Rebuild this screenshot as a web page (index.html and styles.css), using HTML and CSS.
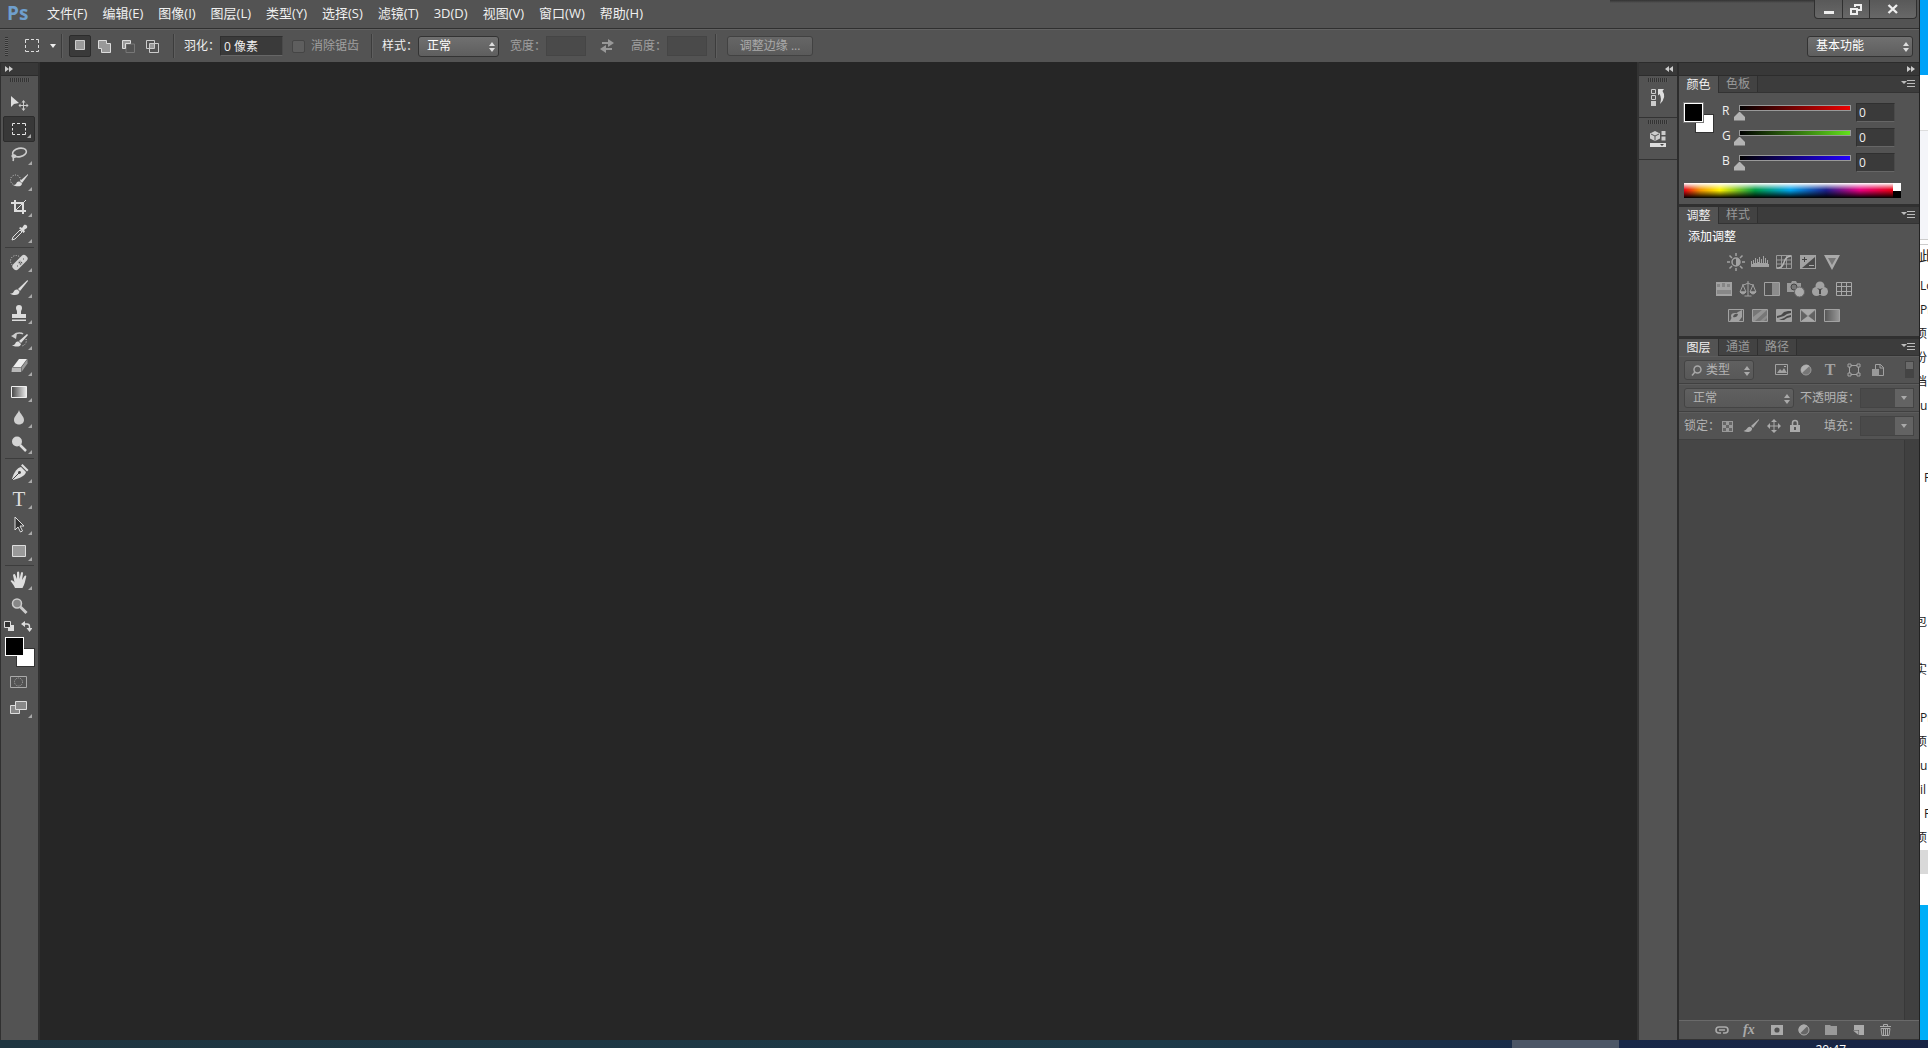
FILE: index.html
```html
<!DOCTYPE html>
<html lang="zh-CN">
<head>
    <meta charset="UTF-8">
    <meta name="viewport" content="width=device-width, initial-scale=1.0">
    <title>Ps</title>
    <link rel="stylesheet" href="styles.css">
</head>
<body>
    <div class="desktop">
        <div class="app">
            <!-- Menu bar -->
            <header class="menubar">
                <div class="logo">Ps</div>
                <nav class="menu">
                    <a href="#">文件(F)</a>
                    <a href="#">编辑(E)</a>
                    <a href="#">图像(I)</a>
                    <a href="#">图层(L)</a>
                    <a href="#">类型(Y)</a>
                    <a href="#">选择(S)</a>
                    <a href="#">滤镜(T)</a>
                    <a href="#">3D(D)</a>
                    <a href="#">视图(V)</a>
                    <a href="#">窗口(W)</a>
                    <a href="#">帮助(H)</a>
                </nav>
                <div class="top-shadow"></div>
                <div class="window-buttons">
                    <button aria-label="最小化"><svg width="12" height="12"><path d="M1 8h10v3H1z" fill="#eee"/></svg></button>
                    <button aria-label="还原"><svg width="12" height="12" fill="none" stroke="#eee" stroke-width="2"><path d="M5 4V2h6v5H8"/><path d="M1 6h6v5H1z"/></svg></button>
                    <button class="wide" aria-label="关闭"><svg width="12" height="12" stroke="#eee" stroke-width="2.400"><path d="M1.500 2l8.500 8M10 2L1.500 10"/></svg></button>
                </div>
            </header>

            <!-- Tool options -->
            <div class="options">
                <div class="grip-v"></div>
                <button class="preset" aria-label="矩形选框工具">
                    <svg width="16" height="16" fill="none" stroke="#ddd"><path d="M1.500 5V1.500H5M7 1.500h3M12 1.500h2.500V5M14.500 7v3M14.500 12v1.500H12M10 13.500H7M5 13.500H1.500V12M1.500 10V7"/></svg>
                    <svg width="6" height="4"><path d="M0 0h6L3 4z" fill="#eee"/></svg>
                </button>
                <div class="divider"></div>
                <div class="modes">
                    <button class="on" aria-label="新选区"><svg width="14" height="14"><path d="M2.500 1.500h9v9h-9z" fill="#999" stroke="#ccc"/></svg></button>
                    <button aria-label="添加到选区"><svg width="14" height="14"><path d="M1.500 1.500h8v3h4v9h-9v-4h-3z" fill="#999" stroke="#ddd"/></svg></button>
                    <button aria-label="从选区减去"><svg width="14" height="14" fill="none"><path d="M5 5h8.500v8.500H5z" stroke="#777"/><path d="M1.500 1.500h8v3h-5v5h-3z" fill="#999" stroke="#ddd"/></svg></button>
                    <button aria-label="与选区交叉"><svg width="14" height="14" fill="none" stroke="#ccc"><path d="M1.500 1.500h8v8h-8z"/><path d="M4.500 4.500h9v9h-9z"/><path d="M5 5h4v4H5z" fill="#999" stroke="none"/></svg></button>
                </div>
                <div class="divider"></div>
                <label for="feather">羽化：</label>
                <input id="feather" class="field feather" type="text" value="0 像素">
                <label class="check dim"><input type="checkbox" disabled>消除锯齿</label>
                <div class="divider"></div>
                <label for="style">样式：</label>
                <span class="picker style-picker">
                    <select id="style"><option>正常</option></select>
                    <svg width="6" height="10"><path d="M0 4l3-4 3 4zM0 6h6l-3 4z"/></svg>
                </span>
                <label for="w" class="dim">宽度：</label>
                <input id="w" class="field size" type="text" disabled>
                <button class="swap" aria-label="交换宽高"><svg width="14" height="14" fill="#999"><path d="M2 3h6V0l6 4-6 4V5H2z"/><path d="M12 9H6V6l-6 4 6 4v-3h6z"/></svg></button>
                <label for="h" class="dim">高度：</label>
                <input id="h" class="field size" type="text" disabled>
                <div class="divider"></div>
                <button class="refine" disabled>调整边缘 ...</button>
                <span class="picker workspace">
                    <select aria-label="工作区"><option>基本功能</option></select>
                    <svg width="6" height="10"><path d="M0 4l3-4 3 4zM0 6h6l-3 4z"/></svg>
                </span>
            </div>

            <main class="workarea">
                <!-- Toolbox -->
                <aside class="toolbox">
                    <div class="dock-head left"><svg width="8" height="6"><path d="M0 0l4 3-4 3zM4 0l4 3-4 3z"/></svg></div>
                    <div class="grip"></div>
                    <div class="tools">
                        <button class="tool plain" aria-label="移动工具"><svg width="20" height="20"><path d="M2 3v11l3-3 5-1z" fill="#ddd"/><path d="M14.500 7l2 2.500h-1.500V12h2.500v-1.500l2 2-2 2V13H15v2.500h1.500l-2 2.500-2-2.500H14V13h-2.500v1.500l-2-2 2-2V12H14V9.500h-1.500z" fill="#ccc"/></svg></button>
                        <button class="tool on" aria-label="矩形选框工具"><svg width="20" height="20" fill="none" stroke="#e4e4e4"><path d="M3.500 7V4.500H6M8 4.500h3M13 4.500h3.500V7M16.500 9v2.500M16.500 13v2.500H13M11 15.500H8M6 15.500H3.500V13M3.500 11.500V9"/></svg></button>
                        <button class="tool" aria-label="套索工具"><svg width="20" height="20" fill="none" stroke="#ccc" stroke-width="1.600"><ellipse cx="10.500" cy="7.500" rx="7" ry="4.200" transform="rotate(-12 10.500 7.500)"/><path d="M4 10c-2 1 0 3 2 2s-1-3-2-1c0 2 1 3 0 5"/></svg></button>
                        <button class="tool" aria-label="快速选择工具"><svg width="20" height="20"><circle cx="6.500" cy="9" r="5" fill="none" stroke="#ccc" stroke-dasharray="1 1.500"/><path d="M19 3l-8 7 2 2 6-8z" fill="#ddd"/><path d="M10.500 10.500c-2-.5-3 1-3.500 2.500-.5 1-2 1-3 1 3 2 9 2 9-1.500z" fill="#ddd"/></svg></button>
                        <button class="tool" aria-label="裁剪工具"><svg width="20" height="20" fill="none" stroke="#ddd" stroke-width="2"><path d="M6 3v11h11M2 6h12v11"/><path d="M6 14l11-11" stroke-width="1"/></svg></button>
                        <button class="tool" aria-label="吸管工具"><svg width="20" height="20"><path d="M11 7l2 2-7 7-3 1 1-3z" fill="#555" stroke="#ddd"/><path d="M10 5l1.500-1 1.500 1 2-3c2-1 4 1 3 3l-3 2 1 1.500-1.500 1.500z" fill="#ddd"/></svg></button>
                        <hr>
                        <button class="tool" aria-label="污点修复画笔工具"><svg width="20" height="20"><circle cx="7" cy="9" r="5.500" fill="none" stroke="#ccc" stroke-dasharray="1 1.500"/><rect x="2" y="7" width="18" height="7" rx="3" fill="#d4d4d4" transform="rotate(-45 11 10.500)"/><path d="M8.500 10.500l2.500-2.500 3 3-2.500 2.500z" fill="#aaa"/><path d="M10 10.500h1M12 10.500h1M11 12h1M14 7h1M8 14h1" stroke="#555"/></svg></button>
                        <button class="tool" aria-label="画笔工具"><svg width="20" height="20"><path d="M18.500 2L9 11l2 2 8-10z" fill="#ddd"/><path d="M8.500 11.500c-2-.5-3.500 1-4 2.500-.5 1-2 1.500-3.500 1.500 3.500 2.500 9.500 2 9.500-2z" fill="#ddd"/></svg></button>
                        <button class="tool" aria-label="仿制图章工具"><svg width="20" height="20" fill="#ddd"><path d="M10 1a3 3 0 0 1 3 3c0 2-1 2-1 4v2h5v4H3v-4h5V8c0-2-1-2-1-4a3 3 0 0 1 3-3zM3 15.500h14V17H3z"/></svg></button>
                        <button class="tool" aria-label="历史记录画笔工具"><svg width="20" height="20"><path d="M5 5c3-3 8-2 9-1" fill="none" stroke="#ccc" stroke-width="1.500"/><path d="M2 6l6-3-1 6z" fill="#ccc"/><path d="M18 4l-8 7 2 2 7-8z" fill="#ddd"/><path d="M9.500 11.500c-2-.5-3 1-3.500 2.500-.5 1-2 1-3 1 3 2.500 9 2 9-1z" fill="#ddd"/><path d="M17 9c1 4-1 6-4 7" fill="none" stroke="#ccc" stroke-dasharray="1 1.500"/></svg></button>
                        <button class="tool" aria-label="橡皮擦工具"><svg width="20" height="20"><path d="M10 3h8l-6 8H4z" fill="#eee"/><path d="M3 11.500h9V16H2.500z" fill="#b8b8b8"/><path d="M18.500 3v4.500L12.500 16v-4.500z" fill="#999"/></svg></button>
                        <button class="tool" aria-label="渐变工具"><svg width="20" height="20"><defs><linearGradient id="g1"><stop stop-color="#444"/><stop offset="1" stop-color="#eee"/></linearGradient></defs><path d="M2.500 4.500h15v11h-15z" fill="url(#g1)" stroke="#eee"/></svg></button>
                        <button class="tool" aria-label="模糊工具"><svg width="20" height="20"><path d="M10 2c1 4 5 6 5 10 0 3-2.500 4.500-5 4.500S5 15 5 12c0-4 4-6 5-10z" fill="#cfcfcf"/></svg></button>
                        <button class="tool" aria-label="减淡工具"><svg width="20" height="20"><circle cx="8" cy="7.500" r="5" fill="#d4d4d4"/><path d="M11 11l6 6" stroke="#ddd" stroke-width="2.500"/></svg></button>
                        <hr>
                        <button class="tool" aria-label="钢笔工具"><svg width="20" height="20"><path d="M12 4l5 5c-1 4-6 6-13 8L3 16C5 9 8 5 12 4z" fill="#ddd"/><path d="M3 17l7-7" stroke="#444"/><circle cx="10.500" cy="9.500" r="1.400" fill="#444"/><path d="M12 2.500l1.500-1.500 6 6-1.500 1.500z" fill="#ddd"/></svg></button>
                        <button class="tool type" aria-label="横排文字工具">T</button>
                        <button class="tool" aria-label="路径选择工具"><svg width="20" height="20"><path d="M6 2v13l3-3 2.500 5 2-1-2.500-5h4z" fill="#333" stroke="#ddd"/></svg></button>
                        <button class="tool" aria-label="矩形工具"><svg width="20" height="20"><path d="M3.500 4.500h13v11h-13z" fill="#999" stroke="#ddd"/></svg></button>
                        <hr>
                        <button class="tool" aria-label="抓手工具"><svg width="20" height="20"><path d="M6 18c-1-3-3-5-4.500-7 1-1.500 2.500-.5 4 1.500L4 5c1-1.500 2-1 2.500.5L8 9V2.500c.5-1.500 2-1.500 2.200 0L10.500 9 12 3c.5-1.500 2-1 2 .5L13 10l2.500-4c1-1 2-.5 1.700.8C16 11 16 14 13.500 18z" fill="#ddd"/></svg></button>
                        <button class="tool plain" aria-label="缩放工具"><svg width="20" height="20"><circle cx="8" cy="7.500" r="4.500" fill="#888" stroke="#ccc" stroke-width="1.500"/><path d="M11.500 11l6 6" stroke="#ccc" stroke-width="3"/></svg></button>
                    </div>
                    <div class="color-actions">
                        <svg width="11" height="11"><path d="M4 4h6v6H4z" fill="#ddd"/><path d="M.5.5h6v6h-6z" fill="#333" stroke="#ddd"/></svg>
                        <svg width="11" height="11" fill="none" stroke="#ddd" stroke-width="1.400"><path d="M2 3h4q2.500 0 2.500 2.500V8"/><path d="M4 0v6L0 3zM5.500 7h6l-3 4z" fill="#ddd" stroke="none"/></svg>
                    </div>
                    <div class="swatches"><span class="back"></span><span class="fore"></span></div>
                    <button class="tool plain" aria-label="快速蒙版"><svg width="20" height="20" fill="none" stroke="#aaa"><path d="M1.500 4.500h16v11h-16z"/><circle cx="9.500" cy="10" r="4" stroke-dasharray="1 1"/></svg></button>
                    <button class="tool" aria-label="屏幕模式"><svg width="20" height="20" fill="#888" stroke="#ddd"><path d="M1.500 7.500h9v8h-9z"/><path d="M6.500 3.500h11v8h-11z"/></svg></button>
                </aside>

                <section class="canvas"></section>

                <!-- Collapsed icon dock -->
                <aside class="icon-dock">
                    <div class="dock-head"><svg width="8" height="6"><path d="M4 0L0 3l4 3zM8 0L4 3l4 3z"/></svg></div>
                    <div class="dock-group">
                        <div class="grip"></div>
                        <button aria-label="历史记录"><svg width="18" height="20"><path d="M2.500 2.500h4v4h-4zM2.500 8.500h4v4h-4z" fill="none" stroke="#ccc"/><path d="M2 14h5v5H2z" fill="#ccc"/><path d="M9 2h6l-1.500 2q4.500 6-2.500 13 2-6-.5-10L9 8.500z" fill="#ddd"/></svg></button>
                    </div>
                    <div class="dock-group">
                        <div class="grip"></div>
                        <button aria-label="属性"><svg width="18" height="20"><path d="M6 2l5 2.500v5L6 12 1 9.500v-5z" fill="#ccc"/><path d="M2 5l4 2 4-2M6 7v4.500" fill="none" stroke="#555"/><path d="M12.500 2h4v4h-4zM12.500 7.500h4v4h-4z" fill="#ccc"/><path d="M1 14h16v4H1z" fill="#ddd"/><path d="M11 15h4l-2 2z" fill="#444"/></svg></button>
                    </div>
                </aside>

                <!-- Panels -->
                <aside class="panels">
                    <div class="dock-head"><svg width="8" height="6"><path d="M0 0l4 3-4 3zM4 0l4 3-4 3z"/></svg></div>

                    <section class="panel">
                        <div class="tabs">
                            <button class="active">颜色</button><button>色板</button>
                            <svg class="flyout" width="14" height="10"><path d="M0 2h6L3 5z" fill="#bbb"/><path d="M6 1.500h8M6 4.500h8M6 7.500h8" stroke="#bbb"/></svg>
                        </div>
                        <div class="color-body">
                            <div class="color-main">
                                <div class="swatches"><span class="back"></span><span class="fore"></span></div>
                                <div class="channels">
                                    <label for="r">R</label><input id="r" class="red" type="range" min="0" max="255" value="0"><input class="field" type="text" value="0" aria-label="R">
                                    <label for="g">G</label><input id="g" class="green" type="range" min="0" max="255" value="0"><input class="field" type="text" value="0" aria-label="G">
                                    <label for="b">B</label><input id="b" class="blue" type="range" min="0" max="255" value="0"><input class="field" type="text" value="0" aria-label="B">
                                </div>
                            </div>
                            <div class="ramp"><div class="spectrum"></div><div class="ends"></div></div>
                        </div>
                    </section>

                    <section class="panel">
                        <div class="tabs">
                            <button class="active">调整</button><button>样式</button>
                            <svg class="flyout" width="14" height="10"><path d="M0 2h6L3 5z" fill="#bbb"/><path d="M6 1.500h8M6 4.500h8M6 7.500h8" stroke="#bbb"/></svg>
                        </div>
                        <div class="adjust-body">
                            <p>添加调整</p>
                            <div class="adjust-row">
                                <svg width="18" height="18"><circle cx="9" cy="9" r="4" fill="none" stroke="#a2a2a2" stroke-width="1.500"/><path d="M9 5a4 4 0 0 1 0 8z" fill="#a2a2a2"/><path d="M9 0v3M9 15v3M0 9h3M15 9h3M2.500 2.500L5 5M13 13l2.500 2.500M2.500 15.500L5 13M13 5l2.500-2.500" stroke="#a2a2a2" stroke-width="1.500"/></svg>
                                <svg width="18" height="18"><path d="M0 14V8h1v3h1V7h1v3h1V5h1v5h1V6h1v3h1V4h1v6h1V6h1v4h1V3h1v7h1V5h1v5h1V7h1v4h1v3z" fill="#a2a2a2"/></svg>
                                <svg width="18" height="18" fill="none" stroke="#9a9a9a"><path d="M1.500 2.500h15v13h-15zM6.500 2.500v13M11.500 2.500v13M1.500 7h15M1.500 11h15"/><path d="M2 15C12 15 6 4 16 3" stroke="#b4b4b4" stroke-width="1.500"/></svg>
                                <svg width="18" height="18"><path d="M1 2h16v14H1z" fill="#a2a2a2"/><path d="M16 4v11H3z" fill="#4a4a4a"/><path d="M5.500 4v5M3 6.500h5" stroke="#444"/><path d="M10 12.500h5" stroke="#aaa"/></svg>
                                <svg width="18" height="18"><path d="M1 2h16L9 17z" fill="#aaa"/><path d="M5 5h8l-4 7z" fill="#777"/></svg>
                            </div>
                            <div class="adjust-row">
                                <svg width="18" height="18"><path d="M1 2h16v14H1z" fill="#a2a2a2"/><path d="M2 4h3v3H2zM7 3h3v4H7zM12 4h3v3h-3z" fill="#868686"/><path d="M2 10h14v4H2z" fill="#888"/></svg>
                                <svg width="18" height="18" fill="none" stroke="#a2a2a2"><path d="M9 1v15M5.500 16h7M3 5q3 0 6-2 3 2 6 2M4 5L1 12h6L4 5M14 5l-3 7h6z"/><path d="M1 12q3 4 6 0zM11 12q3 4 6 0z" fill="#a2a2a2"/></svg>
                                <svg width="18" height="18"><path d="M1.500 2.500h15v13h-15z" fill="#505050" stroke="#a2a2a2"/><path d="M9 3h7v12H9z" fill="#8c8c8c"/></svg>
                                <svg width="18" height="18"><path d="M0 3h4l1-2h4l1 2h4v9H0z" fill="#999"/><circle cx="7" cy="7" r="3" fill="#777" stroke="#444"/><circle cx="12.500" cy="12" r="5" fill="#aaa" stroke="#666"/></svg>
                                <svg width="18" height="18" fill="#a2a2a2"><circle cx="9" cy="6" r="4.500"/><circle cx="5.500" cy="11.500" r="4.500"/><circle cx="12.500" cy="11.500" r="4.500"/><path d="M6 8l3 1 3-1-2 2v4H8v-4z" fill="#484848"/></svg>
                                <svg width="18" height="18" fill="none" stroke="#a8a8a8"><path d="M1.500 2.500h15v13h-15zM6.500 2.500v13M11.500 2.500v13M1.500 6.500h15M1.500 11.500h15"/></svg>
                            </div>
                            <div class="adjust-row">
                                <svg width="18" height="18"><path d="M1.500 2.500h15v12h-15z" fill="#5c5c5c" stroke="#a2a2a2"/><path d="M11 5l4-2v7l-3 4H3l2-4z" fill="#a2a2a2"/><ellipse cx="8" cy="9" rx="4" ry="3" fill="#a2a2a2"/><path d="M6 10q1-4 5-3-1 4-5 3z" fill="#555"/></svg>
                                <svg width="18" height="18"><path d="M1.500 2.500h15v12h-15z" fill="#777" stroke="#a2a2a2"/><path d="M2 10l9-7h5L4 14H2z" fill="#949494"/><path d="M9 14l7-6v3l-3 3z" fill="#8c8c8c"/></svg>
                                <svg width="18" height="18"><path d="M1.500 2.500h15v12h-15z" fill="#a2a2a2" stroke="#a2a2a2"/><path d="M2 9l4-1 3-3 4-1h3v2l-4 1-3 2-7 2zM4 13l5-2 3-2 4-1v2l-4 1-3 2z" fill="#484848"/></svg>
                                <svg width="18" height="18"><path d="M1.500 2.500h15v12h-15z" fill="#777" stroke="#a2a2a2"/><path d="M2 3h14L9 9zM2 14l7-5 7 5z" fill="#a8a8a8"/><path d="M2 4l6 5-6 5zM16 4l-6 5 6 5z" fill="#626262"/></svg>
                                <svg width="18" height="18"><defs><linearGradient id="g2"><stop stop-color="#555"/><stop offset="1" stop-color="#999"/></linearGradient></defs><path d="M1.500 2.500h15v12h-15z" fill="url(#g2)" stroke="#a2a2a2"/></svg>
                            </div>
                        </div>
                    </section>

                    <section class="panel layers">
                        <div class="tabs">
                            <button class="active">图层</button><button>通道</button><button>路径</button>
                            <svg class="flyout" width="14" height="10"><path d="M0 2h6L3 5z" fill="#bbb"/><path d="M6 1.500h8M6 4.500h8M6 7.500h8" stroke="#bbb"/></svg>
                        </div>
                        <div class="layer-row filter-row">
                            <span class="picker flat kind">
                                <svg class="lens" width="11" height="11" fill="none" stroke="#a8a8a8" stroke-width="1.500"><circle cx="6.500" cy="4.500" r="3.500"/><path d="M4 7L1 10.500"/></svg>
                                <select aria-label="图层类型"><option>类型</option></select>
                                <svg width="6" height="10"><path d="M0 4l3-4 3 4zM0 6h6l-3 4z"/></svg>
                            </span>
                            <div class="filters">
                                <svg width="14" height="14"><path d="M.5 1.500h12v10H.5z" fill="#555" stroke="#a2a2a2"/><path d="M2 10l3-4 2 2 2-3 3 5z" fill="#a2a2a2"/><path d="M9 3h2v1H9z" fill="#aaa"/></svg>
                                <svg width="14" height="14"><circle cx="7" cy="7" r="5" fill="#777" stroke="#999"/><path d="M3 10A5.200 5.200 0 0 1 10.500 3z" fill="#b0b0b0"/></svg>
                                <span class="t-icon">T</span>
                                <svg width="14" height="14" fill="none" stroke="#a2a2a2"><path d="M2.500 4v6M11.500 4v6M4 2.500h6M4 11.500h6"/><path d="M1 1h3v3H1zM10 1h3v3h-3zM1 10h3v3H1zM10 10h3v3h-3z"/></svg>
                                <svg width="14" height="14"><path d="M4.500 1.500h5l3 3v8h-8z" fill="none" stroke="#a2a2a2"/><path d="M9 1v4h4" fill="none" stroke="#a2a2a2"/><path d="M1 6h7v7H1z" fill="#999"/></svg>
                            </div>
                            <span class="switch"></span>
                        </div>
                        <div class="layer-row">
                            <span class="picker flat blend">
                                <select aria-label="混合模式"><option>正常</option></select>
                                <svg width="6" height="10"><path d="M0 4l3-4 3 4zM0 6h6l-3 4z"/></svg>
                            </span>
                            <label class="push" for="opacity">不透明度：</label>
                            <span class="combo"><input id="opacity" type="text" disabled><button aria-label="不透明度"><svg width="6" height="4"><path d="M0 0h6L3 4z" fill="#aaa"/></svg></button></span>
                        </div>
                        <div class="layer-row">
                            <span>锁定：</span>
                            <div class="locks">
                                <svg width="14" height="14"><path d="M1 2h11v11H1z" fill="#999"/><path d="M2 3h3v3H2zM8 3h3v3H8zM5 6h3v3H5zM2 9h3v3H2zM8 9h3v3H8z" fill="#666"/></svg>
                                <svg width="16" height="14"><path d="M16 0L8 7l2 2 6-8z" fill="#aaa"/><path d="M7.500 8c-3-1-3 3-7 4 4 2 9 1 8.500-3z" fill="#aaa"/></svg>
                                <svg width="14" height="14" fill="#aaa"><path d="M7 0l3 3H7.500v3.500H11V4l3 3-3 3V7.500H7.500V11H10l-3 3-3-3h2.500V7.500H3V10L0 7l3-3v2.500h3.500V3H4z"/></svg>
                                <svg width="12" height="14"><path d="M3.500 7V4a2.500 2.500 0 0 1 5 0v3" fill="none" stroke="#aaa" stroke-width="1.500"/><path d="M1 6h10v7H1z" fill="#aaa"/><path d="M5 8h2v3H5z" fill="#555"/></svg>
                            </div>
                            <label class="push" for="fill">填充：</label>
                            <span class="combo"><input id="fill" type="text" disabled><button aria-label="填充"><svg width="6" height="4"><path d="M0 0h6L3 4z" fill="#aaa"/></svg></button></span>
                        </div>
                        <div class="layer-list"><div class="scrollbar"></div></div>
                        <div class="layer-foot">
                            <svg width="16" height="14" fill="none" stroke="#aaa" stroke-width="1.600"><path d="M7 10H5a3 3 0 0 1 0-6h6a3 3 0 0 1 0 6H9M5 7h6"/></svg>
                            <span class="fx">fx</span>
                            <svg width="14" height="14"><path d="M1 2h12v10H1z" fill="#aaa"/><circle cx="7" cy="7" r="2.600" fill="#505050"/></svg>
                            <svg width="14" height="14"><circle cx="7" cy="7" r="5" fill="#666" stroke="#aaa"/><path d="M3 10.500A5.200 5.200 0 0 1 10.500 3z" fill="#aaa"/></svg>
                            <svg width="14" height="14"><path d="M1 2h5l1 1h6v9H1z" fill="#999"/></svg>
                            <svg width="14" height="14"><path d="M3 2h10v10H8V7H3z" fill="#aaa"/><path d="M2 7.500h5.500V12z" fill="#aaa"/></svg>
                            <svg width="14" height="14" fill="none" stroke="#aaa"><path d="M2 3.500h11M5.500 3V1.500h4V3M3 5.500l1 7h7l1-7zM5.500 5.500v7M7.500 5.500v7M9.500 5.500v7"/></svg>
                        </div>
                    </section>
                </aside>
            </main>
        </div>

        <!-- Edge of the window behind -->
        <div class="behind">
            <div class="page-head"></div>
            <div class="page-bar"></div>
            <div class="crumb">此</div>
            <ul>
                <li>Lo</li>
                <li>Pr</li>
                <li class="cut">项</li>
                <li class="cut">份</li>
                <li class="cut">档</li>
                <li>u</li>
                <li></li>
                <li></li>
                <li class="in">F</li>
                <li></li>
                <li></li>
                <li></li>
                <li></li>
                <li></li>
                <li class="cut">包</li>
                <li></li>
                <li class="cut">实</li>
                <li></li>
                <li>Pr</li>
                <li class="cut">项</li>
                <li>u</li>
                <li>il</li>
                <li class="in">F</li>
                <li class="cut">项</li>
                <li class="selected"></li>
            </ul>
            <div class="page-end"></div>
        </div>
    </div>
    <footer class="taskbar">
        <div class="task"></div>
        <time>20:47</time>
    </footer>
</body>
</html>
```
FILE: styles.css
```css
* {
    box-sizing: border-box;
}

body {
    margin: 0;
    height: 100vh;
    display: flex;
    flex-direction: column;
    overflow: hidden;
    background: #262626;
    color: #f0f0f0;
    font: 12px/16px "Open Sans", "Noto Sans CJK SC", sans-serif;
}

button, input, select {
    margin: 0;
    padding: 0;
    border: 0;
    border-radius: 0;
    background: none;
    color: inherit;
    font: inherit;
}

svg {
    display: block;
    flex: none;
}

.desktop {
    flex: 1;
    min-height: 0;
    display: flex;
}

.app {
    flex: 1;
    min-width: 0;
    display: flex;
    flex-direction: column;
    background: #535353;
    border-right: 1px solid #222;
}

/* Menu bar */
.menubar {
    height: 29px;
    display: flex;
    align-items: center;
    padding: 0 2px 2px 7px;
    border-bottom: 1px solid #303030;
}

.logo {
    width: 40px;
    color: #6f9fcd;
    font: bold 19px/26px "Open Sans", sans-serif;
}

.menu {
    display: flex;
    gap: 15px;
    font-size: 13px;
}

.menu a {
    color: #f0f0f0;
    text-decoration: none;
}

.top-shadow {
    width: 204px;
    height: 3px;
    margin-left: auto;
    align-self: flex-start;
    background: linear-gradient(#333, #535353);
}

.window-buttons {
    display: flex;
    align-self: flex-start;
    height: 19px;
    border: 1px solid #303030;
    border-top: 0;
    border-radius: 0 0 4px 4px;
    background: linear-gradient(#595959, #686868);
}

.window-buttons button {
    width: 27px;
    display: grid;
    place-items: center;
}

.window-buttons button + button {
    border-left: 1px solid #303030;
}

.window-buttons .wide {
    width: 47px;
}

/* Options bar */
.options {
    height: 33px;
    display: flex;
    align-items: center;
    padding: 0 6px 0 5px;
    border-top: 1px solid #626262;
}

.grip-v {
    width: 3px;
    height: 19px;
    background: repeating-linear-gradient(#333 0 1px, #666 1px 2px);
}

.preset {
    display: flex;
    align-items: center;
    gap: 10px;
    margin: 0 5px 0 16px;
}

.divider {
    width: 2px;
    height: 24px;
    background: #3c3c3c;
    border-right: 1px solid #5e5e5e;
}

.modes {
    display: flex;
    gap: 2px;
    margin: 0 10px 0 6px;
}

.modes button {
    width: 22px;
    height: 22px;
    display: grid;
    place-items: center;
}

.modes .on {
    background: #3a3a3a;
    border: 1px solid #2c2c2c;
    border-radius: 2px;
}

.options label {
    margin-left: 9px;
    white-space: nowrap;
}

.dim {
    color: #a0a0a0;
}

.field {
    height: 20px;
    padding: 0 3px;
    background: #3a3a3a;
    border: 1px solid #303030;
    border-right-color: #4a4a4a;
    border-bottom-color: #666;
}

.feather {
    width: 63px;
}

.size {
    width: 40px;
}

.field:disabled {
    background: #4a4a4a;
    border-color: #454545;
}

.check {
    display: flex;
    align-items: center;
    gap: 6px;
    margin-right: 12px;
}

.check input {
    appearance: none;
    width: 13px;
    height: 13px;
    background: #5e5e5e;
    border: 1px solid #454545;
    border-radius: 2px;
}

.picker {
    position: relative;
    display: flex;
}

.picker select {
    appearance: none;
    width: 100%;
    height: 21px;
    padding-left: 8px;
    background: linear-gradient(#707070, #5e5e5e);
    border: 1px solid #333;
    border-radius: 3px;
    color: #fff;
}

.picker svg {
    position: absolute;
    right: 4px;
    top: 6px;
    fill: #ddd;
}

.style-picker {
    width: 81px;
    margin-right: 2px;
}

.workspace {
    width: 106px;
    margin-left: auto;
}

.swap {
    margin: 0 8px 0 14px;
}

.size + .divider {
    margin: 0 10px 0 8px;
}

.refine {
    width: 86px;
    height: 20px;
    background: linear-gradient(#666, #5a5a5a);
    border: 1px solid #424242;
    border-radius: 3px;
    color: #aaa;
}

/* Docks */
.workarea {
    flex: 1;
    min-height: 0;
    display: flex;
}

.dock-head {
    flex: none;
    height: 14px;
    display: flex;
    align-items: center;
    justify-content: flex-end;
    padding: 0 4px;
    background: #383838;
    border-top: 1px solid #2c2c2c;
    border-bottom: 1px solid #2c2c2c;
}

.dock-head svg {
    fill: #ccc;
}

.dock-head.left {
    justify-content: flex-start;
}

.grip {
    width: 20px;
    height: 4px;
    margin: 2px auto 0;
    background: repeating-linear-gradient(90deg, #333 0 1px, #5a5a5a 1px 2px);
}

.toolbox {
    width: 40px;
    border-left: 1px solid #303030;
    border-right: 2px solid #303030;
}

.tools {
    margin-top: 8px;
}

.tools hr {
    height: 1px;
    margin: 1px 4px;
    border: 0;
    background: #3c3c3c;
}

.tool {
    position: relative;
    display: grid;
    place-items: center;
    width: 32px;
    height: 26px;
    margin-left: 2px;
}

.tool::after {
    content: "";
    position: absolute;
    right: 3px;
    bottom: 3px;
    border: 2px solid transparent;
    border-right-color: #aaa;
    border-bottom-color: #aaa;
}

.tool.plain::after {
    display: none;
}

.tool.on {
    background: #383838;
    border: 1px solid #2c2c2c;
    border-radius: 2px;
}

.tool.type {
    font: 21px/24px "Liberation Serif", serif;
    color: #ddd;
}

.color-actions {
    display: flex;
    justify-content: space-between;
    padding: 2px 6px 5px 3px;
}

.swatches {
    position: relative;
    width: 30px;
    height: 30px;
}

.swatches span {
    position: absolute;
    width: 19px;
    height: 19px;
    border: 1px solid #333;
}

.swatches .fore {
    left: 0;
    top: 0;
    background: #000;
    border-color: #fff;
    outline: 1px solid #777;
}

.swatches .back {
    right: 0;
    bottom: 0;
    background: #fff;
}

.toolbox .swatches {
    margin: 0 0 2px 4px;
}

.toolbox .swatches .fore {
    outline: 0;
}

.canvas {
    flex: 1;
    background: #262626;
}

.icon-dock {
    width: 40px;
    border-left: 2px solid #333;
}

.dock-group {
    height: 40px;
    border-bottom: 1px solid #333;
}

.dock-group button {
    display: block;
    margin: 5px auto 0;
}

/* Panels */
.panels {
    width: 242px;
    display: flex;
    flex-direction: column;
    border-left: 2px solid #2c2c2c;
}

.tabs {
    display: flex;
    height: 17px;
    background: #3c3c3c;
    border-bottom: 1px solid #333;
}

.tabs button {
    width: 39px;
    height: 16px;
    background: #424242;
    border-right: 1px solid #303030;
    color: #999;
    line-height: 14px;
}

.tabs .active {
    width: 40px;
    height: 17px;
    background: #535353;
    color: #f0f0f0;
}

.flyout {
    margin: 3px 4px 0 auto;
}

.color-body {
    height: 114px;
    padding: 10px 18px 0 5px;
    border-bottom: 3px solid #303030;
}

.color-main {
    display: flex;
    height: 80px;
}

.channels {
    flex: 1;
    display: grid;
    grid-template-columns: 12px 1fr 39px;
    grid-auto-rows: 20px;
    gap: 5px 0;
    padding: 0 6px 0 8px;
}

.channels .field {
    height: 19px;
    padding: 0 2px;
}

.channels input[type="range"] {
    appearance: none;
    width: 100%;
    height: 20px;
    background: linear-gradient(90deg, #000, var(--end)) 6px 3px / calc(100% - 12px) 4px no-repeat,
        linear-gradient(#999, #999) 5px 2px / calc(100% - 10px) 6px no-repeat;
}

.channels input::-webkit-slider-thumb {
    appearance: none;
    width: 11px;
    height: 9px;
    margin-top: 6px;
    background: #b4b4b4;
    clip-path: polygon(50% 0, 100% 60%, 100% 100%, 0 100%, 0 60%);
}

.red {
    --end: #e00;
}

.green {
    --end: #62e01c;
}

.blue {
    --end: #20f;
}

.ramp {
    display: flex;
    height: 15px;
}

.spectrum {
    flex: 1;
    background: linear-gradient(#fff, transparent 45%, transparent 50%, #000),
        linear-gradient(90deg, #e60012, #f39800 8%, #fff100 17%, #009944 34%, #00a0e9 51%, #1d2088 68%, #e4007f 84%, #e60012);
}

.ends {
    width: 8px;
    background: linear-gradient(#fff 50%, #000 50%);
}

.adjust-body {
    height: 115px;
    padding: 5px 0 0 9px;
    border-bottom: 3px solid #303030;
}

.adjust-body p {
    margin: 0 0 8px;
    color: #fff;
}

.adjust-row {
    display: flex;
    justify-content: center;
    gap: 6px;
    height: 27px;
    padding-right: 39px;
}

.layers {
    flex: 1;
    min-height: 0;
    display: flex;
    flex-direction: column;
}

.layers .tabs {
    flex: none;
}

.layer-row {
    flex: none;
    height: 28px;
    display: flex;
    align-items: center;
    padding: 0 5px 1px 5px;
    border-bottom: 1px solid #404040;
    border-top: 1px solid #5c5c5c;
    color: #b4b4b4;
}

.flat select {
    height: 20px;
    background: linear-gradient(#606060, #585858);
    border-color: #444;
    color: #b4b4b4;
}

.flat svg {
    fill: #aaa;
}

.picker .lens {
    left: 7px;
    right: auto;
    top: 5px;
    fill: none;
}

.kind {
    width: 70px;
}

.kind select {
    padding-left: 21px;
}

.blend {
    width: 110px;
}

.filters {
    display: flex;
    align-items: center;
    gap: 10px;
    margin-left: 21px;
}

.t-icon {
    width: 14px;
    font: bold 16px/16px "Liberation Serif", serif;
    text-align: center;
    color: #a2a2a2;
}

.switch {
    width: 9px;
    height: 17px;
    margin-left: auto;
    background: linear-gradient(#6a6a6a 50%, #444 50%);
    border: 1px solid #444;
}

.push {
    margin-left: auto;
}

.combo {
    display: flex;
    width: 54px;
    height: 20px;
    border: 1px solid #444;
}

.combo input {
    flex: 1;
    width: 0;
    background: #4a4a4a;
}

.combo button {
    width: 18px;
    display: grid;
    place-items: center;
    background: #636363;
}

.locks {
    display: flex;
    align-items: center;
    gap: 8px;
    margin-left: 1px;
}

.layer-list {
    flex: 1;
    display: flex;
    justify-content: flex-end;
    background: #464646;
}

.scrollbar {
    width: 15px;
    background: #404040;
    border-left: 1px solid #383838;
}

.layer-foot {
    flex: none;
    height: 20px;
    display: flex;
    align-items: center;
    justify-content: flex-end;
    gap: 13px;
    padding-right: 27px;
    border-top: 1px solid #6a6a6a;
    border-bottom: 1px solid #333;
}

.fx {
    width: 14px;
    color: #aaa;
    font: italic bold 14px/14px "Liberation Serif", serif;
}

/* Window behind the application */
.behind {
    width: 8px;
    overflow: hidden;
    display: flex;
    flex-direction: column;
    background: #fff;
    border-top: 75px solid #00a2f8;
    color: #222;
}

.page-head {
    height: 56px;
    border-bottom: 1px solid #ddd;
}

.page-bar {
    height: 114px;
    background: linear-gradient(#f4f5f9 108px, #ccc 108px 109px, #fff 109px);
    border-bottom: 1px solid #ccc;
}

.crumb {
    height: 29px;
    line-height: 22px;
    font-size: 14px;
    text-indent: -1px;
}

.behind ul {
    margin: 0;
    padding: 0;
    list-style: none;
    white-space: nowrap;
}

.behind li {
    height: 24px;
    line-height: 24px;
}

.behind .cut {
    text-indent: -5px;
}

.behind .in {
    text-indent: 4px;
}

.behind .selected {
    background: #d9d9d9;
}

.page-end {
    flex: 1;
    margin-top: 31px;
    background: #00aef8;
}

/* Taskbar */
.taskbar {
    height: 8px;
    overflow: hidden;
    display: flex;
    justify-content: flex-end;
    padding-right: 82px;
    background: linear-gradient(90deg, #1f3540, #1d3a48 60%, #182848 84%, #182444);
}

.task {
    width: 107px;
    margin-right: 196px;
    background: #4c5666;
}

.taskbar time {
    padding-top: 2px;
    color: #fff;
}
```
